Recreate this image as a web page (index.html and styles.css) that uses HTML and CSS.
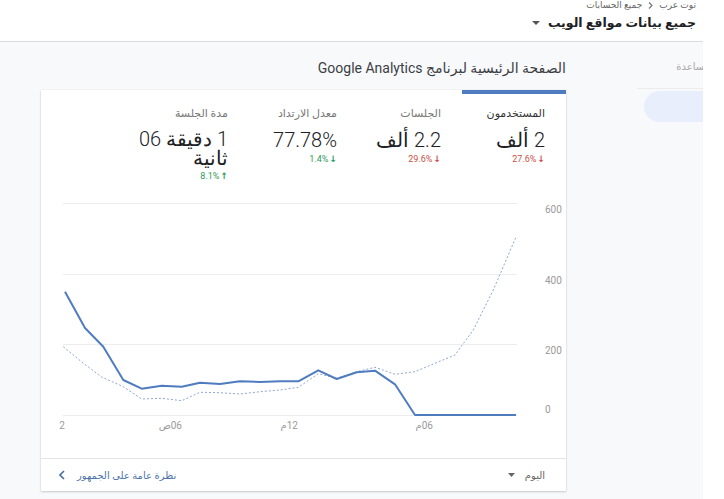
FILE: index.html
```html
<!DOCTYPE html>
<html lang="ar" dir="rtl">
<head>
<meta charset="utf-8">
<title>Google Analytics</title>
<link rel="stylesheet" href="styles.css">
</head>
<body>
<div class="page">
  <header class="topbar">
    <div class="crumbs">
      <span>توت عرب</span>
      <svg class="crumb-sep" width="5" height="7" viewBox="0 0 5 7"><path d="M1 0.5 L4 3.5 L1 6.5" fill="none" stroke="#777" stroke-width="1.2"/></svg>
      <span>جميع الحسابات</span>
    </div>
    <div class="view-title">
      <span>جميع بيانات مواقع الويب</span>
      <svg class="caret" width="8" height="4" viewBox="0 0 8 4"><path d="M0 0 L8 0 L4 4 Z" fill="#555"/></svg>
    </div>
  </header>

  <div class="main">
    <aside class="side">
      <div class="side-help">مساعدة</div>
      <div class="side-nav"><div class="side-pill"></div></div>
    </aside>

    <section class="content">
      <h1 class="section-title">الصفحة الرئيسية لبرنامج Google Analytics</h1>
      <div class="card">
        <div class="tabs">
          <div class="tab active">
            <div class="tab-label">المستخدمون</div>
            <div class="tab-value">2 ألف</div>
            <div class="tab-change bad"><span class="arr">&#8595;</span><span>27.6%</span></div>
          </div>
          <div class="tab">
            <div class="tab-label">الجلسات</div>
            <div class="tab-value">2.2 ألف</div>
            <div class="tab-change bad"><span class="arr">&#8595;</span><span>29.6%</span></div>
          </div>
          <div class="tab">
            <div class="tab-label">معدل الارتداد</div>
            <div class="tab-value">77.78%</div>
            <div class="tab-change good"><span class="arr">&#8595;</span><span>1.4%</span></div>
          </div>
          <div class="tab wide">
            <div class="tab-label">مدة الجلسة</div>
            <div class="tab-value">1 دقيقة 06<br>ثانية</div>
            <div class="tab-change good"><span class="arr">&#8593;</span><span>8.1%</span></div>
          </div>
        </div>

        <svg class="chart" width="525" height="268" viewBox="41 190 525 268">
          <g stroke="#ececec" stroke-width="1">
            <line x1="63" y1="203.5" x2="517" y2="203.5"/>
            <line x1="63" y1="274.5" x2="517" y2="274.5"/>
            <line x1="63" y1="344.5" x2="517" y2="344.5"/>
            <line x1="63" y1="415.5" x2="517" y2="415.5"/>
          </g>
          <g class="axis" font-size="10" fill="#9a9a9a">
            <text x="545" y="213" text-anchor="end">600</text>
            <text x="545" y="284" text-anchor="end">400</text>
            <text x="545" y="354" text-anchor="end">200</text>
            <text x="545" y="413" text-anchor="end">0</text>
            <text x="62" y="429" text-anchor="middle">2</text>
            <text x="182" y="429" text-anchor="start">06ص</text>
            <text x="298" y="429" text-anchor="start">12م</text>
            <text x="433" y="429" text-anchor="start">06م</text>
          </g>
          <polyline fill="none" stroke="#8ea7d2" stroke-width="1" stroke-dasharray="2,2"
            points="63.3,346.7 83,363 101.7,377 123.3,386.7 141.7,399 161.7,398.3 181.7,400.7 200,392.3 220,392.7 240,394 260,391.7 280,390 298.3,387.3 318.3,373.7 336.7,378.3 356.7,371.7 375,367.3 395,374.3 415,371.7 435,363.3 455,355 473.3,330 493.3,290 516,237"/>
          <polyline fill="none" stroke="#4f7cbf" stroke-width="2" stroke-linejoin="round"
            points="65,291.7 85,328 103.3,346.7 123.3,380 141.7,388.7 161.7,385.7 181.7,386.7 200,382.7 220,384 240,381.3 260,382 280,381.3 298.3,381.3 318.3,370.3 336.7,379 356.7,372.3 375,370.7 395,384.3 415,415 516,415"/>
        </svg>

        <div class="card-foot">
          <div class="range">
            <span>اليوم</span>
            <svg class="caret" width="7" height="4" viewBox="0 0 7 4"><path d="M0 0 L7 0 L3.5 4 Z" fill="#666"/></svg>
          </div>
          <a class="foot-link" href="#">
            <span>نظرة عامة على الجمهور</span>
            <svg class="chev" width="6" height="10" viewBox="0 0 6 10"><path d="M5 1 L1 5 L5 9" fill="none" stroke="#4a6fa5" stroke-width="1.6"/></svg>
          </a>
        </div>
      </div>
    </section>
  </div>
</div>
</body>
</html>
```

FILE: styles.css
```css
html, body {
  margin: 0;
  padding: 0;
  background: #ffffff;
}

body {
  font-family: Roboto, "DejaVu Sans", sans-serif;
  color: #212121;
  width: 724px;
  height: 499px;
  overflow: hidden;
}

.page {
  width: 703px;
  height: 499px;
  margin-left: 0;
  margin-right: auto;
  background: #f8f9fb;
  display: flex;
  flex-direction: column;
}

.topbar {
  height: 41px;
  background: #ffffff;
  border-bottom: 1px solid #dcdcdc;
  padding-right: 7px;
  display: flex;
  flex-direction: column;
  align-items: flex-start;
}

.crumbs {
  display: flex;
  align-items: center;
  gap: 6px;
  font-size: 9px;
  line-height: 11px;
  color: #666;
  margin-top: 0;
}

.view-title {
  display: flex;
  align-items: center;
  gap: 8px;
  font-size: 12.5px;
  font-weight: bold;
  line-height: 20px;
  color: #202124;
  margin-top: 2px;
}

.main {
  display: flex;
  flex: 1;
}

.side {
  width: 66px;
  overflow: hidden;
  flex-shrink: 0;
}

.side-help {
  margin-right: -7px;
  margin-top: 20px;
  font-size: 10px;
  line-height: 10px;
  color: #a8a8a8;
  white-space: nowrap;
}

.side-nav {
  margin-top: 16px;
  border-top: 1px solid #ececec;
  margin-left: -4px;
  padding-top: 2px;
  padding-left: 11px;
}

.side-pill {
  height: 31px;
  background: #e8eefb;
  border-radius: 16px 0 0 16px;
  margin-right: -20px;
}

.content {
  flex: 1;
  padding: 0 71px 0 41px;
}

.section-title {
  margin: 16px 0 12px;
  font-size: 14px;
  line-height: 20px;
  font-weight: normal;
  color: #3c4043;
}

.card {
  width: 525px;
  background: #ffffff;
  box-shadow: 0 1px 2px rgba(0, 0, 0, 0.18), 0 0 1px rgba(0, 0, 0, 0.12);
  display: flex;
  flex-direction: column;
}

.tabs {
  display: flex;
  height: 100px;
}

.tab {
  width: 104px;
  height: 100px;
  box-sizing: border-box;
  border-top: 4px solid transparent;
  padding: 13px 21px 0 0;
}

.tab.active {
  border-top-color: #4f7cbf;
}

.tab.wide {
  padding-right: 26px;
  width: 130px;
}

.tab-label {
  font-size: 11px;
  line-height: 14px;
  color: #777;
  white-space: nowrap;
}

.tab.active .tab-label {
  color: #333;
}

.tab-value {
  margin-top: 10px;
  font-size: 20px;
  line-height: 18px;
  font-weight: 300;
  color: #202124;
  white-space: nowrap;
}

.tab.wide .tab-value {
  line-height: 19px;
  margin-top: 9px;
}

.tab-change {
  margin-top: 4px;
  font-size: 9px;
  line-height: 12px;
  display: flex;
  align-items: center;
  gap: 1px;
}

.tab.wide .tab-change {
  margin-top: 2px;
}

.tab-change .arr {
  font-size: 9px;
  font-weight: bold;
}

.tab-change.bad {
  color: #c9514a;
}

.tab-change.good {
  color: #2f9a5c;
}

.chart {
  display: block;
}

.axis text {
  font-family: Roboto, "DejaVu Sans", sans-serif;
}

.card-foot {
  height: 32px;
  border-top: 1px solid #e4e4e4;
  display: flex;
  align-items: center;
  justify-content: space-between;
  padding: 0 21px 0 18px;
}

.range {
  display: flex;
  align-items: center;
  gap: 10px;
  font-size: 10px;
  color: #666;
}

.foot-link {
  display: flex;
  align-items: center;
  gap: 12px;
  font-size: 10px;
  color: #4d74ad;
  text-decoration: none;
}
```
